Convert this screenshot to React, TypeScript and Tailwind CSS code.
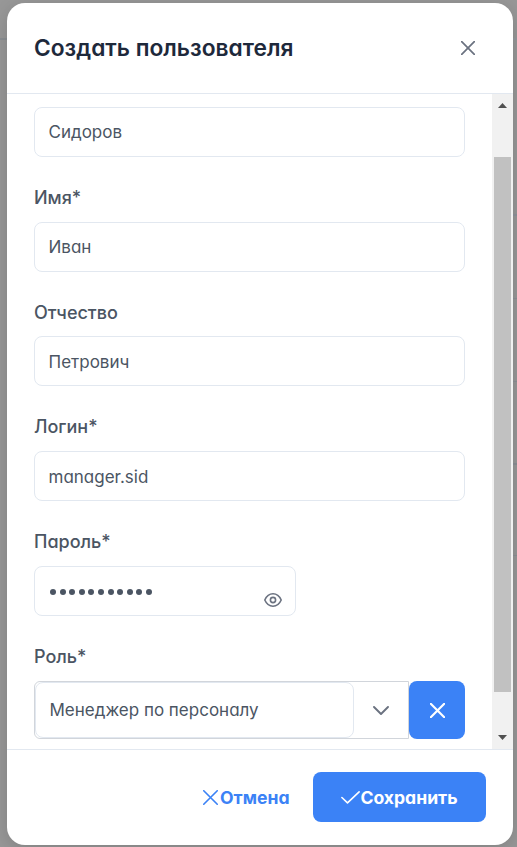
import type { ReactNode } from "react";

function Cross({ className }: { className: string }) {
  return (
    <svg className={className} viewBox="0 0 14 14" fill="none" stroke="currentColor" strokeLinecap="round">
      <path d="M.7 .7 13.3 13.3M13.3 .7 .7 13.3" />
    </svg>
  );
}

function Field({ label, height, gap = "mb-[13px]", children }: { label?: string; height: string; gap?: string; children: ReactNode }) {
  return (
    <div className={`flex shrink-0 flex-col justify-end ${height}`}>
      {label && (
        <label className={`block h-[22px] text-[18px] leading-[22px] font-medium text-[#4b5563] ${gap}`}>{label}</label>
      )}
      {children}
    </div>
  );
}

function TextBox({ children, inset = "pt-[2px]" }: { children: ReactNode; inset?: string }) {
  return (
    <div className={`flex h-[50px] shrink-0 items-center rounded-lg border border-[#e2e8f0] px-[13.5px] text-[17px] text-[#4b5563] ${inset}`}>
      {children}
    </div>
  );
}

export default function App() {
  return (
    <div className="flex h-[847px] w-[517px] overflow-hidden bg-[#989898] pt-[3px] font-['Inter','Liberation_Sans',sans-serif] [font-feature-settings:'cv11','cv02','cv03','cv04']">
      <div className="w-[7px] shrink-0 pt-[35px]">
        <div className="h-[2px] bg-[#8b8f93]" />
      </div>
      <div className="flex h-[842px] w-[506px] shrink-0 flex-col overflow-hidden rounded-[18px] bg-white shadow-[0_4px_20px_rgba(0,0,0,0.16)]">
        <header className="flex h-[91px] shrink-0 items-center justify-between border-b border-[#e2e8f0] pr-[38px] pl-[27px]">
          <h1 className="text-[22.75px] leading-7 font-semibold text-[#1e293b]">Создать пользователя</h1>
          <Cross className="mb-px size-[14px] text-[#6b7280] [stroke-width:1.7]" />
        </header>

        <main className="flex h-[655px] shrink-0">
          <form className="flex w-[485px] flex-col px-[27px]">
            <Field height="h-[63px]"><TextBox>Сидоров</TextBox></Field>
            <Field label="Имя*" height="h-[115px]"><TextBox>Иван</TextBox></Field>
            <Field label="Отчество" height="h-[114px]" gap="mb-[12px]"><TextBox inset="pt-[4px]">Петрович</TextBox></Field>
            <Field label="Логин*" height="h-[115px]"><TextBox inset="pt-[4px]">manager.sid</TextBox></Field>
            <Field label="Пароль*" height="h-[115px]">
              <div className="flex h-[50px] w-[262px] shrink-0 items-center justify-between rounded-lg border border-[#e2e8f0] pr-[13px] pl-[15px]">
                <div className="mt-[2px] flex gap-[3.6px]">
                  {Array.from({ length: 11 }, (_, i) => (
                    <span key={i} className="size-[6px] rounded-full bg-[#4b5563]" />
                  ))}
                </div>
                <svg className="mt-[18px] h-[14px] w-[18px] text-[#6b7280]" viewBox="0 0 18 14" fill="none" stroke="currentColor" strokeWidth="1.6">
                  <path d="M.8 7C2.6 2.9 5.5.8 9 .8S15.4 2.9 17.2 7C15.4 11.1 12.5 13.2 9 13.2S2.6 11.1.8 7Z" strokeLinejoin="round" />
                  <circle cx="9" cy="7" r="2.6" />
                </svg>
              </div>
            </Field>
            <Field label="Роль*" height="h-[123px]">
              <div className="flex h-[58px] shrink-0">
                <div className="flex w-[375px] rounded-l-md border border-[#d1d5db]">
                  <div className="flex h-[56px] w-[319px] items-center rounded-lg border border-[#e2e8f0] px-[13.5px] pt-[2px] text-[17px] text-[#4b5563]">
                    Менеджер по персоналу
                  </div>
                  <div className="flex flex-1 items-center justify-center">
                    <svg className="h-[9px] w-[16px] text-[#6b7280]" viewBox="0 0 16 9" fill="none" stroke="currentColor" strokeWidth="1.9" strokeLinecap="round" strokeLinejoin="round">
                      <path d="m1 1 7 7 7-7" />
                    </svg>
                  </div>
                </div>
                <button type="button" className="flex w-[56px] items-center justify-center rounded-lg bg-[#3b82f6]">
                  <Cross className="size-[15px] text-white [stroke-width:2]" />
                </button>
              </div>
            </Field>
          </form>
          <div className="flex w-[21px] flex-col items-center bg-[#f1f1f1]">
            <svg className="mt-[9px] h-[5px] w-[9px]" viewBox="0 0 9 5" fill="#505050"><path d="M0 5 4.5 0 9 5Z" /></svg>
            <div className="mt-[49px] h-[535px] w-[17px] bg-[#c1c1c1]" />
            <svg className="mt-[43px] h-[5px] w-[9px]" viewBox="0 0 9 5" fill="#505050"><path d="M0 0 4.5 5 9 0Z" /></svg>
          </div>
        </main>

        <footer className="flex flex-1 items-center justify-end border-t border-[#e2e8f0] pr-[27px] pb-[2px] text-[17.6px] font-bold">
          <button type="button" className="mr-[23.5px] flex items-center pt-[2px] text-[#3b82f6]">
            <Cross className="mr-[2px] size-[15px] [stroke-width:1.5]" />
            <span className="pt-[2px]">Отмена</span>
          </button>
          <button type="button" className="flex h-[50px] w-[173px] items-center justify-center rounded-lg bg-[#3b82f6] pt-[2px] text-white">
            <svg className="h-[13px] w-[19px]" viewBox="0 0 19 13" fill="none" stroke="currentColor" strokeWidth="1.6" strokeLinecap="round" strokeLinejoin="round">
              <path d="m.9 6.5 5.6 5.4L18.1.9" />
            </svg>
            <span className="pt-[2px]">Сохранить</span>
          </button>
        </footer>
      </div>
      <div className="w-[4px] shrink-0 pt-[35px]">
        <div className="h-[2px] bg-[#8b8f93]" />
        <div className="mt-[174px] h-[2px] bg-[#858991]" />
        <div className="mt-[82px] h-px bg-[#83868c]" />
        <div className="mt-[82px] h-px bg-[#83868c]" />
        <div className="mt-[81px] h-[2px] bg-[#82858b]" />
        <div className="mt-[90px] h-px bg-[#83868c]" />
      </div>
    </div>
  );
}
